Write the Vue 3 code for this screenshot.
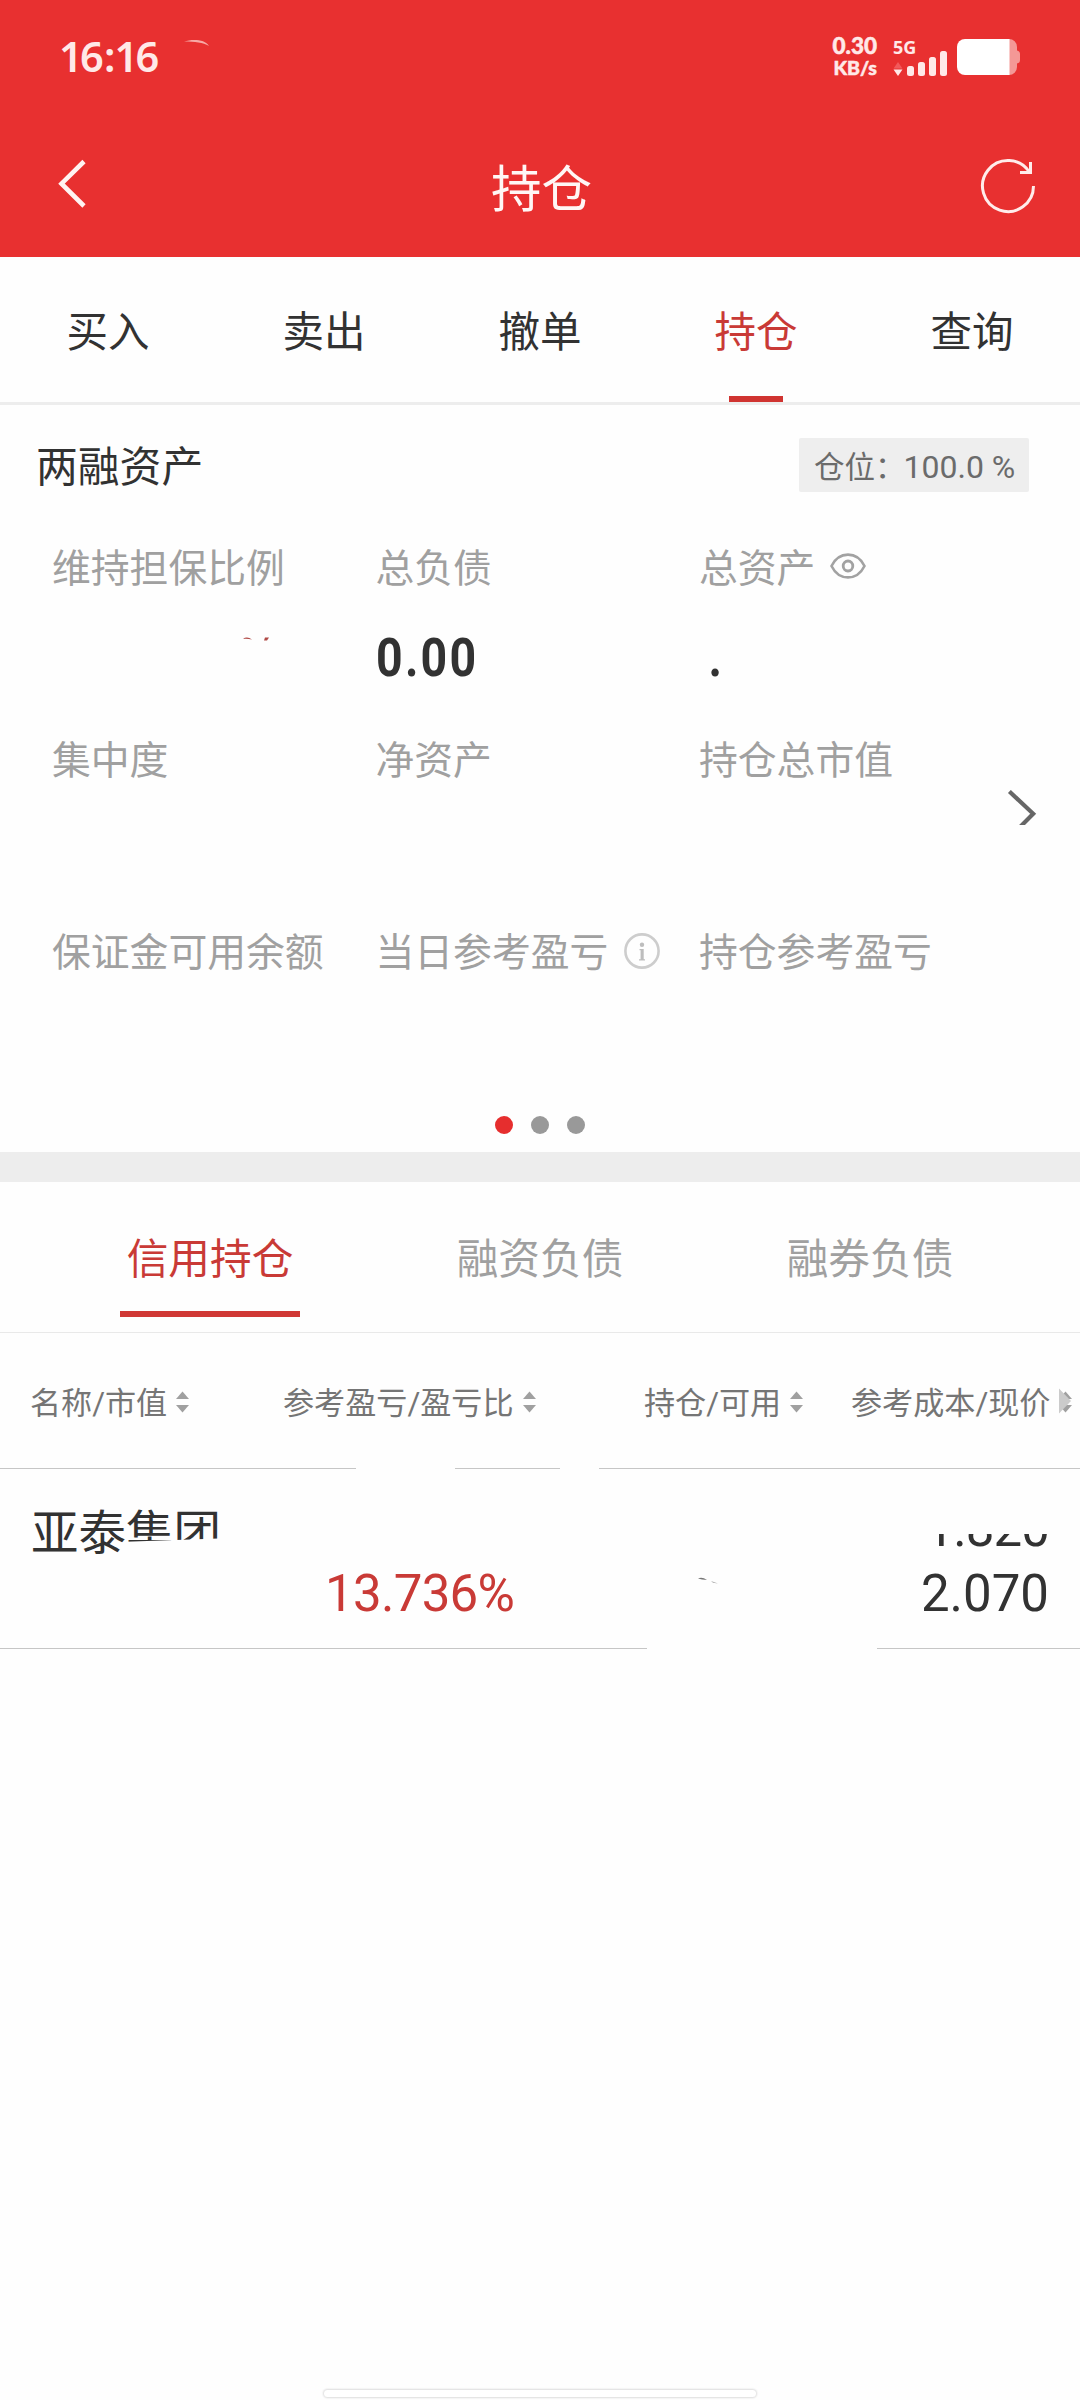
<template>
  <div class="page">
    <header class="top">
      <div class="status">
        <span class="time">16<span class="colon">:</span>16</span>
        <svg class="glint" width="28" height="10" viewBox="0 0 28 10">
          <path d="M1 2.5C9 0 22 0 26 7C20 3.5 12 2.5 1 2.5Z" fill="#f7a9a6" />
        </svg>
        <div class="net">
          <span class="speed">0.30</span>
          <span class="unit">KB/s</span>
        </div>
        <div class="signal">
          <span class="gen">5G</span>
          <svg width="56" height="26" viewBox="0 0 56 26">
            <path d="M0.5 18.5L5 12L9.5 18.5Z" fill="#f2595b" />
            <path d="M0.5 19.5L5 26L9.5 19.5Z" fill="#ffe9e8" />
            <rect x="14" y="16" width="7" height="10" rx="2.5" fill="#ffe9e8" />
            <rect x="25" y="12" width="7" height="14" rx="2.5" fill="#ffe9e8" />
            <rect x="36" y="7" width="7" height="19" rx="2.5" fill="#ffe9e8" />
            <rect x="47" y="1" width="7" height="25" rx="2.5" fill="#ffe9e8" />
          </svg>
        </div>
        <svg class="battery" width="64" height="36" viewBox="0 0 64 36">
          <path d="M50 0H52A8 8 0 0 1 60 8V11.500Q63 12 63 15V21Q63 24 60 24.500V28A8 8 0 0 1 52 36H50Z" fill="#f49896" />
          <path d="M8 0H52.500V36H8A8 8 0 0 1 0 28V8A8 8 0 0 1 8 0Z" fill="#fff" />
        </svg>
      </div>
      <div class="navbar">
        <svg class="back" width="30" height="50" viewBox="0 0 30 50">
          <path d="M26 2.500L3.500 24.700L26 47" fill="none" stroke="#fff3f2" stroke-width="4.600" />
        </svg>
        <h1>持仓</h1>
        <svg class="refresh" width="56" height="56" viewBox="0 0 56 56" fill="none" stroke="#ffeceb" stroke-width="3">
          <path d="M53.500 28A25.500 25.500 0 1 1 49.500 14.300" />
          <path d="M50.500 4V14.500H40" />
        </svg>
      </div>
    </header>

    <nav class="tabs">
      <div v-for="tab in tabs" :key="tab" class="tab" :class="{ active: tab === '持仓' }">{{ tab }}</div>
    </nav>

    <section class="assets">
      <div class="assets-head">
        <h2>两融资产</h2>
        <span class="badge">仓位：<span class="pct">100.0 %</span></span>
      </div>
      <div class="grid">
        <div v-for="item in assets" :key="item.label" class="cell">
          <div class="label">
            {{ item.label }}
            <svg v-if="item.icon === 'eye'" class="eye" width="36" height="26" viewBox="0 0 36 26" fill="none" stroke="#a2a2a2" stroke-width="2.600">
              <path d="M1.500 13C9 -2.200 27 -2.200 34.500 13C27 28.200 9 28.200 1.500 13Z" />
              <ellipse cx="18" cy="13" rx="4.800" ry="5" stroke-width="2.800" />
            </svg>
            <svg v-if="item.icon === 'info'" class="info" width="36" height="36" viewBox="0 0 36 36">
              <circle cx="18" cy="18" r="16.600" fill="none" stroke="#cdcdcd" stroke-width="2.600" />
              <circle cx="18" cy="11.800" r="2.200" fill="#bdbdbd" />
              <path d="M15.500 16H19.700V26.300H21V27.500H15V26.300H16.600V17.200H15.500Z" fill="#bdbdbd" />
            </svg>
          </div>
          <div v-if="item.masked" class="masked">
            <svg width="26" height="5" viewBox="0 0 26 5">
              <path d="M0 2Q4 -1 9 2.500Q4 1.500 0 2Z" fill="#b04a46" />
              <path d="M22 0.500H26L24 3.500H21Z" fill="#b04a46" />
            </svg>
          </div>
          <div v-else class="value" :class="{ point: item.value === '.' }">{{ item.value }}</div>
        </div>
        <svg class="more" width="32" height="36" viewBox="0 0 32 36">
          <path d="M2 1.500L26.500 24.500L12 39" fill="none" stroke="#666" stroke-width="4.300" />
        </svg>
      </div>
      <div class="dots">
        <i class="on"></i><i></i><i></i>
      </div>
    </section>

    <nav class="subtabs">
      <div v-for="(tab, i) in subtabs" :key="tab" class="subtab" :class="{ active: i === 0 }">
        <span>{{ tab }}</span>
      </div>
    </nav>

    <div class="thead">
      <div v-for="(col, i) in columns" :key="col" class="th" :class="'c' + i">
        {{ col }}
        <svg class="sort" width="13" height="26" viewBox="0 0 13 26">
          <path d="M0 11L6.500 3.500L13 11Z" fill="#a0a0a0" />
          <path d="M0 17L6.500 24.500L13 17Z" fill="#a0a0a0" />
          <path v-if="i === 3" d="M0 0.500L12 13L0 25.500Z" fill="#cbcbcb" />
        </svg>
      </div>
      <i class="gap gap-a"></i>
      <i class="gap gap-b"></i>
    </div>

    <div class="row">
      <div class="line">
        <span class="name">亚泰集团</span>
        <span class="cost">1.820</span>
      </div>
      <div class="line">
        <span class="rate">13.736%</span>
        <svg class="speck" width="22" height="8" viewBox="0 0 22 8">
          <path d="M0 1.500Q4 -0.500 9 3L4 2.500Z" fill="#777" />
          <path d="M13 4L20 6.500L15 5.800Z" fill="#aaa" />
        </svg>
        <span class="price">2.070</span>
      </div>
      <i class="cover cover-name"></i>
      <i class="cover cover-cost"></i>
      <i class="gap gap-c"></i>
    </div>

    <div class="home-bar"></div>
  </div>
</template>

<script setup>
const tabs = ['买入', '卖出', '撤单', '持仓', '查询']

const assets = [
  { label: '维持担保比例', value: '', masked: true },
  { label: '总负债', value: '0.00' },
  { label: '总资产', value: '.', icon: 'eye' },
  { label: '集中度', value: '' },
  { label: '净资产', value: '' },
  { label: '持仓总市值', value: '' },
  { label: '保证金可用余额', value: '' },
  { label: '当日参考盈亏', value: '', icon: 'info' },
  { label: '持仓参考盈亏', value: '' }
]

const subtabs = ['信用持仓', '融资负债', '融券负债']

const columns = ['名称/市值', '参考盈亏/盈亏比', '持仓/可用', '参考成本/现价']
</script>

<style>
body {
  margin: 0;
  background: #fefefe;
}
</style>

<style scoped>
.page {
  display: flex;
  flex-direction: column;
  width: 1080px;
  height: 2400px;
  overflow: hidden;
  background: #fefefe;
  color: #323232;
  font-family: Roboto, "Noto Sans CJK SC", sans-serif;
  white-space: nowrap;
}

svg {
  display: block;
  flex: none;
}

h1,
h2 {
  margin: 0;
  font-weight: 400;
}

.top {
  height: 257px;
  background: #e83030;
  color: #ffe9e8;
}

.status {
  display: flex;
  align-items: flex-start;
  height: 115px;
  box-sizing: border-box;
  padding: 38px 59px 0 59px;
  font-family: "Noto Sans", sans-serif;
}

.time {
  width: 124px;
  font-size: 41.5px;
  line-height: 37px;
  font-weight: 600;
  letter-spacing: -2.8px;
}

.colon {
  margin: 0 2px 0 3px;
}

.glint {
  margin-top: 1px;
}

.net {
  display: flex;
  flex-direction: column;
  align-items: flex-end;
  margin-left: auto;
  width: 60px;
  font-family: Lato, sans-serif;
  font-weight: 900;
}

.speed {
  font-size: 22.5px;
  line-height: 16px;
  -webkit-text-stroke: 0.5px currentColor;
}

.unit {
  margin-top: 6px;
  font-size: 19.5px;
  line-height: 16px;
  -webkit-text-stroke: 0.5px currentColor;
}

.signal {
  width: 56px;
  margin-left: 16px;
}

.gen {
  display: block;
  height: 12px;
  font-size: 18px;
  line-height: 18px;
  font-weight: 700;
}

.battery {
  margin: 1px 0 0 8px;
}

.navbar {
  display: flex;
  align-items: center;
  justify-content: space-between;
  height: 142px;
  padding: 0 44px 0 58px;
}

.back {
  margin: 0 15px 4px 0;
}

.navbar h1 {
  padding-top: 7px;
  color: #fff6f5;
  font-size: 50.5px;
  line-height: 60px;
}

.tabs {
  display: flex;
  height: 145px;
  border-bottom: 3px solid #ededed;
}

.tab {
  position: relative;
  flex: 1;
  font-size: 41.5px;
  line-height: 152px;
  text-align: center;
}

.tab.active {
  color: #c93a36;
}

.tab.active::after {
  content: '';
  position: absolute;
  left: 81px;
  bottom: 0;
  width: 54px;
  height: 6px;
  background: #d03431;
}

.assets {
  height: 747px;
  border-bottom: 30px solid #ededed;
}

.assets-head {
  display: flex;
  align-items: center;
  justify-content: space-between;
  height: 54px;
  padding: 33px 51px 0 36px;
}

.assets-head h2 {
  padding-top: 5px;
  font-size: 41.8px;
  line-height: 54px;
}

.badge {
  box-sizing: border-box;
  width: 230px;
  height: 54px;
  padding-left: 15px;
  border-radius: 2px;
  background: #eee;
  color: #6b6b6b;
  font-size: 30.5px;
  line-height: 58px;
}

.pct {
  margin-left: -2px;
  font-size: 32px;
}

.grid {
  position: relative;
  display: grid;
  grid-template-columns: repeat(3, 323.5px);
  grid-auto-rows: 192px;
  padding: 47px 0 0 52px;
}

.label {
  display: flex;
  align-items: center;
  height: 60px;
  color: #a0a0a0;
  font-size: 38.8px;
  line-height: 60px;
}

.eye {
  margin: -6px 0 0 15px;
}

.info {
  margin: -5px 0 0 16px;
}

/* narrow heavy digits */
.value {
  height: 60px;
  margin-top: 29px;
  font-size: 54px;
  line-height: 60px;
  font-weight: 700;
  letter-spacing: 2.6px;
  transform: scaleX(0.86);
  transform-origin: 0 50%;
}

.value.point {
  padding-left: 11px;
}

.masked {
  padding: 38px 0 0 191px;
}

.more {
  position: absolute;
  left: 1007px;
  top: 298px;
  height: 35px;
}

.dots {
  display: flex;
  justify-content: center;
  gap: 18px;
  padding-top: 1px;
}

.dots i {
  width: 18px;
  height: 18px;
  border-radius: 50%;
  background: #999;
}

.dots .on {
  background: #e62e2e;
}

.subtabs {
  display: flex;
  height: 150px;
  padding: 0 45px;
  border-bottom: 1px solid #e9e9e9;
}

.subtab {
  flex: 1;
  display: flex;
  justify-content: center;
  color: #a0a0a0;
  font-size: 41.7px;
}

.subtab span {
  box-sizing: border-box;
  width: 180px;
  height: 135px;
  line-height: 156px;
  text-align: center;
}

.subtab.active span {
  border-bottom: 6px solid #d03835;
  color: #c93a36;
}

.thead {
  position: relative;
  display: flex;
  height: 135px;
  border-bottom: 1px solid #c6c6c6;
  color: #757575;
  font-size: 31.1px;
  line-height: 135px;
}

.th {
  display: flex;
  align-items: center;
  box-sizing: border-box;
  padding: 5px 0 0 30px;
}

.sort {
  margin: -4px 0 0 9px;
}

.c0 {
  width: 253px;
}

.c1 {
  width: 361px;
}

.c2 {
  width: 207px;
}

.gap {
  position: absolute;
  height: 3px;
  bottom: -2px;
  background: #fefefe;
}

.gap-a {
  left: 356px;
  width: 99px;
}

.gap-b {
  left: 560px;
  width: 39px;
}

.gap-c {
  left: 647px;
  width: 230px;
}

.row {
  position: relative;
  height: 179px;
  border-bottom: 1px solid #c6c6c6;
}

.line {
  display: flex;
  align-items: center;
  justify-content: space-between;
  height: 66px;
  padding: 0 31px;
  font-size: 51px;
  line-height: 66px;
}

.line:first-child {
  height: 64px;
  padding-top: 28px;
}

.name {
  padding-top: 9px;
  font-size: 47.5px;
}

.cost {
  letter-spacing: -0.9px;
}

.rate {
  margin-left: 294px;
  color: #c93a36;
  letter-spacing: -0.7px;
}

.speck {
  margin: -26px 17px 0 0;
}

/* blank patches over part of the figures */
.cover {
  position: absolute;
  background: #fefefe;
}

.cover-name {
  left: 126px;
  top: 71px;
  width: 100px;
  height: 20px;
  transform: rotate(-2deg);
}

.cover-cost {
  left: 925px;
  top: 30px;
  width: 130px;
  height: 35px;
}

.home-bar {
  width: 432px;
  height: 7px;
  margin: auto auto 3px;
  border-radius: 5px;
  background: #fff;
  box-shadow: 0 0 2px 1px #dcdcdc;
}
</style>
